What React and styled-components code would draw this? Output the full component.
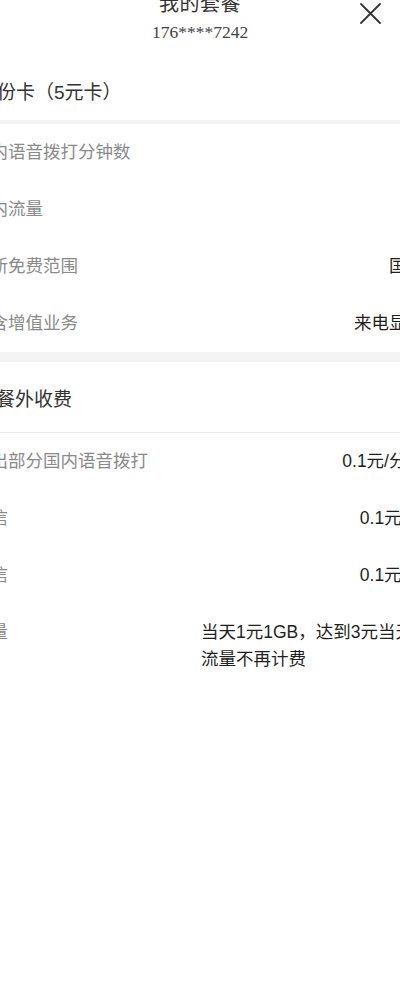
import React from "react";
import styled, { createGlobalStyle } from "styled-components";

const Global = createGlobalStyle`
  html, body { margin: 0; padding: 0; background: #ffffff; }
  body {
    font-family: "Liberation Sans", "Noto Sans CJK SC", sans-serif;
    -webkit-font-smoothing: antialiased;
  }
`;

const Page = styled.div`
  width: 400px;
  min-height: 983px;
  overflow: hidden;
  background: #fff;
`;

const Header = styled.header`
  display: grid;
  grid-template-columns: 1fr auto 1fr;
  height: 60px;
`;

const TitleBlock = styled.div`
  grid-column: 2;
  display: flex;
  flex-direction: column;
  align-items: center;
`;

const Title = styled.div`
  margin-top: -7px;
  font-family: "Noto Sans CJK SC", sans-serif;
  font-size: 20px;
  line-height: 20px;
  color: #333;
  letter-spacing: 0.5px;
`;

const Phone = styled.div`
  margin-top: 9px;
  font-family: "Liberation Serif", serif;
  font-size: 17.5px;
  line-height: 20px;
  color: #444;
`;

const Close = styled.button`
  grid-column: 3;
  justify-self: end;
  align-self: start;
  margin: 3px 19px 0 0;
  padding: 0;
  border: 0;
  background: none;
  width: 21px;
  height: 21px;
  display: flex;
`;

const Sheet = styled.div`
  margin-left: -27px;
  width: 451px;
`;

const SectionTitle = styled.div`
  display: flex;
  align-items: center;
  height: ${(p) => p.$h}px;
  padding-left: ${(p) => p.$indent}px;
  font-family: "Liberation Sans", "Noto Sans CJK SC", sans-serif;
  font-size: 19px;
  color: #333;
  border-bottom: ${(p) => (p.$line ? "1px solid #ececec" : "none")};
`;

const Band = styled.div`
  height: ${(p) => p.$h}px;
  background: #f4f4f4;
`;

const Row = styled.div`
  display: flex;
  justify-content: space-between;
  align-items: flex-start;
  gap: 16px;
  padding: 15px 0;
  font-size: 17.5px;
  line-height: 27px;
`;

const Label = styled.span`
  color: #8a8a8a;
  white-space: nowrap;
`;

const Value = styled.span`
  color: #1f1f1f;
  max-width: 223px;
  text-align: left;
`;

const XIcon = () => (
  <svg width="21" height="21" viewBox="0 0 21 21" fill="none">
    <path d="M1 1 L20 20 M20 1 L1 20" stroke="#333" strokeWidth="1.8" strokeLinecap="round" />
  </svg>
);

const plan = [
  { label: "国内语音拨打分钟数", value: "" },
  { label: "国内流量", value: "" },
  { label: "最新免费范围", value: "国内" },
  { label: "包含增值业务", value: "来电显示" },
];

const extra = [
  { label: "超出部分国内语音拨打", value: "0.1元/分钟" },
  { label: "短信", value: "0.1元/条" },
  { label: "彩信", value: "0.1元/条" },
  { label: "流量", value: "当天1元1GB，达到3元当天流量不再计费" },
];

export default function App() {
  return (
    <Page>
      <Global />
      <Header>
        <TitleBlock>
          <Title>我的套餐</Title>
          <Phone>176****7242</Phone>
        </TitleBlock>
        <Close aria-label="关闭">
          <XIcon />
        </Close>
      </Header>
      <Sheet>
        <SectionTitle $h={60} $indent={5}>身份卡（5元卡）</SectionTitle>
        <Band $h={4} />
        {plan.map((r) => (
          <Row key={r.label}>
            <Label>{r.label}</Label>
            <Value>{r.value}</Value>
          </Row>
        ))}
        <Band $h={10} />
        <SectionTitle $h={70} $indent={4} $line>套餐外收费</SectionTitle>
        {extra.map((r, i) => (
          <Row key={i}>
            <Label>{r.label}</Label>
            <Value>{r.value}</Value>
          </Row>
        ))}
      </Sheet>
    </Page>
  );
}
